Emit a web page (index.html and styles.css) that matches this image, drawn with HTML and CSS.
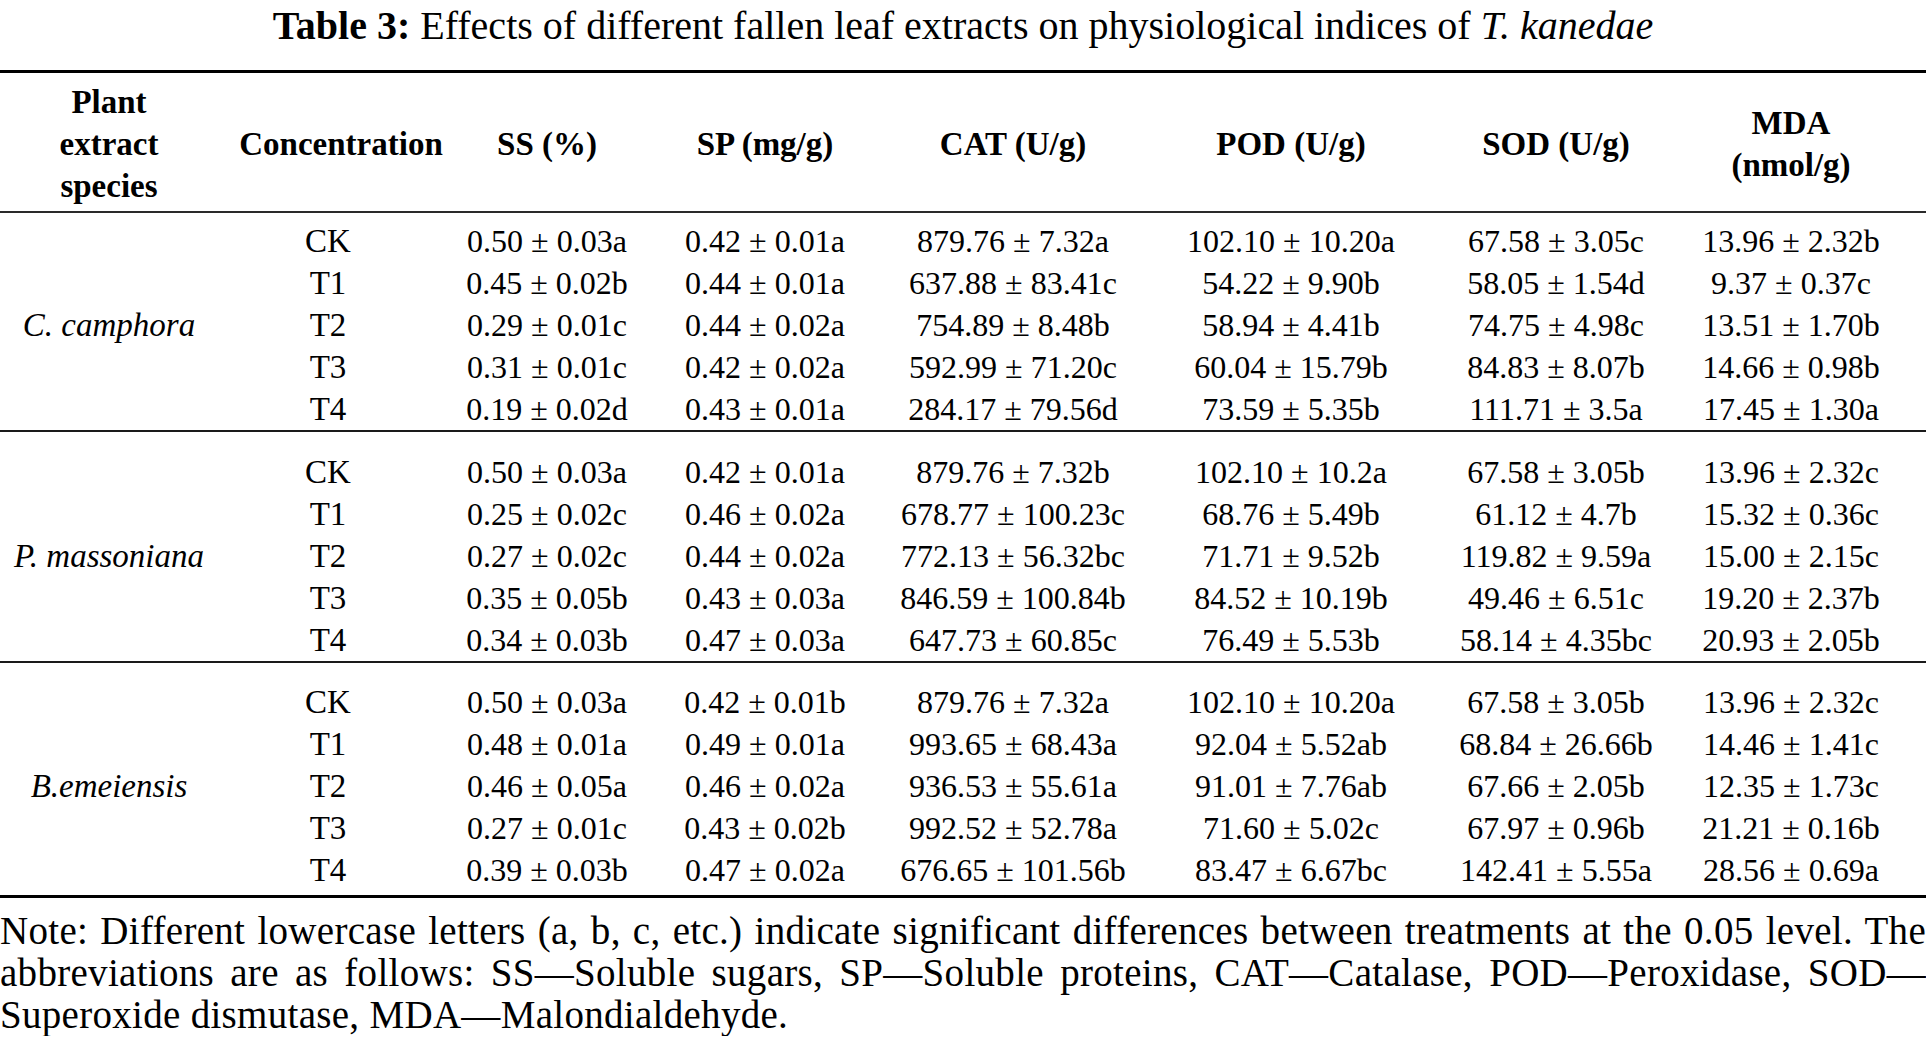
FILE: index.html
```html
<!DOCTYPE html>
<html lang="en">
<head>
<meta charset="utf-8">
<title>Table 3</title>
<link rel="stylesheet" href="styles.css">
</head>
<body>
<div class="page">
  <h1 class="title"><b>Table 3:</b> Effects of different fallen leaf extracts on physiological indices of <i>T. kanedae</i></h1>
  <table class="data">
    <colgroup>
      <col class="c1"><col class="c2"><col class="c3"><col class="c4"><col class="c5"><col class="c6"><col class="c7"><col class="c8">
    </colgroup>
    <thead>
      <tr>
        <th>Plant<br>extract<br>species</th>
        <th>Concentration</th>
        <th>SS (%)</th>
        <th>SP (mg/g)</th>
        <th>CAT (U/g)</th>
        <th>POD (U/g)</th>
        <th>SOD (U/g)</th>
        <th>MDA<br>(nmol/g)</th>
      </tr>
    </thead>
    <tbody class="g g1">
      <tr class="first"><td rowspan="5" class="species"><i>C. camphora</i></td><td class="conc">CK</td><td>0.50 ± 0.03a</td><td>0.42 ± 0.01a</td><td>879.76 ± 7.32a</td><td>102.10 ± 10.20a</td><td>67.58 ± 3.05c</td><td>13.96 ± 2.32b</td></tr>
      <tr><td class="conc">T1</td><td>0.45 ± 0.02b</td><td>0.44 ± 0.01a</td><td>637.88 ± 83.41c</td><td>54.22 ± 9.90b</td><td>58.05 ± 1.54d</td><td>9.37 ± 0.37c</td></tr>
      <tr><td class="conc">T2</td><td>0.29 ± 0.01c</td><td>0.44 ± 0.02a</td><td>754.89 ± 8.48b</td><td>58.94 ± 4.41b</td><td>74.75 ± 4.98c</td><td>13.51 ± 1.70b</td></tr>
      <tr><td class="conc">T3</td><td>0.31 ± 0.01c</td><td>0.42 ± 0.02a</td><td>592.99 ± 71.20c</td><td>60.04 ± 15.79b</td><td>84.83 ± 8.07b</td><td>14.66 ± 0.98b</td></tr>
      <tr class="last"><td class="conc">T4</td><td>0.19 ± 0.02d</td><td>0.43 ± 0.01a</td><td>284.17 ± 79.56d</td><td>73.59 ± 5.35b</td><td>111.71 ± 3.5a</td><td>17.45 ± 1.30a</td></tr>
    </tbody>
    <tbody class="g g2">
      <tr class="first"><td rowspan="5" class="species"><i>P. massoniana</i></td><td class="conc">CK</td><td>0.50 ± 0.03a</td><td>0.42 ± 0.01a</td><td>879.76 ± 7.32b</td><td>102.10 ± 10.2a</td><td>67.58 ± 3.05b</td><td>13.96 ± 2.32c</td></tr>
      <tr><td class="conc">T1</td><td>0.25 ± 0.02c</td><td>0.46 ± 0.02a</td><td>678.77 ± 100.23c</td><td>68.76 ± 5.49b</td><td>61.12 ± 4.7b</td><td>15.32 ± 0.36c</td></tr>
      <tr><td class="conc">T2</td><td>0.27 ± 0.02c</td><td>0.44 ± 0.02a</td><td>772.13 ± 56.32bc</td><td>71.71 ± 9.52b</td><td>119.82 ± 9.59a</td><td>15.00 ± 2.15c</td></tr>
      <tr><td class="conc">T3</td><td>0.35 ± 0.05b</td><td>0.43 ± 0.03a</td><td>846.59 ± 100.84b</td><td>84.52 ± 10.19b</td><td>49.46 ± 6.51c</td><td>19.20 ± 2.37b</td></tr>
      <tr class="last"><td class="conc">T4</td><td>0.34 ± 0.03b</td><td>0.47 ± 0.03a</td><td>647.73 ± 60.85c</td><td>76.49 ± 5.53b</td><td>58.14 ± 4.35bc</td><td>20.93 ± 2.05b</td></tr>
    </tbody>
    <tbody class="g g3">
      <tr class="first"><td rowspan="5" class="species"><i>B.emeiensis</i></td><td class="conc">CK</td><td>0.50 ± 0.03a</td><td>0.42 ± 0.01b</td><td>879.76 ± 7.32a</td><td>102.10 ± 10.20a</td><td>67.58 ± 3.05b</td><td>13.96 ± 2.32c</td></tr>
      <tr><td class="conc">T1</td><td>0.48 ± 0.01a</td><td>0.49 ± 0.01a</td><td>993.65 ± 68.43a</td><td>92.04 ± 5.52ab</td><td>68.84 ± 26.66b</td><td>14.46 ± 1.41c</td></tr>
      <tr><td class="conc">T2</td><td>0.46 ± 0.05a</td><td>0.46 ± 0.02a</td><td>936.53 ± 55.61a</td><td>91.01 ± 7.76ab</td><td>67.66 ± 2.05b</td><td>12.35 ± 1.73c</td></tr>
      <tr><td class="conc">T3</td><td>0.27 ± 0.01c</td><td>0.43 ± 0.02b</td><td>992.52 ± 52.78a</td><td>71.60 ± 5.02c</td><td>67.97 ± 0.96b</td><td>21.21 ± 0.16b</td></tr>
      <tr class="last"><td class="conc">T4</td><td>0.39 ± 0.03b</td><td>0.47 ± 0.02a</td><td>676.65 ± 101.56b</td><td>83.47 ± 6.67bc</td><td>142.41 ± 5.55a</td><td>28.56 ± 0.69a</td></tr>
    </tbody>
  </table>
  <div class="note">
    <span class="line just">Note: Different lowercase letters (a, b, c, etc.) indicate significant differences between treatments at the 0.05 level. The</span>
    <span class="line just">abbreviations are as follows: SS—Soluble sugars, SP—Soluble proteins, CAT—Catalase, POD—Peroxidase, SOD—</span>
    <span class="line">Superoxide dismutase, MDA—Malondialdehyde.</span>
  </div>
</div>
</body>
</html>
```

FILE: styles.css
```css
html, body {
  margin: 0;
  padding: 0;
  background: #ffffff;
}

body {
  color: #000000;
  font-family: "Liberation Serif", "Times New Roman", serif;
}

.page {
  width: 1926px;
}

.title {
  margin: 0 0 21px 0;
  padding-top: 2px;
  font-size: 40px;
  line-height: 47px;
  font-weight: normal;
  text-align: center;
  white-space: nowrap;
}

.title b {
  font-weight: bold;
}

.data {
  width: 1926px;
  table-layout: fixed;
  border-collapse: separate;
  border-spacing: 0;
}

.c1 { width: 218px; }
.c2 { width: 246px; }
.c3 { width: 166px; }
.c4 { width: 270px; }
.c5 { width: 226px; }
.c6 { width: 330px; }
.c7 { width: 200px; }
.c8 { width: 270px; }

.data th {
  font-size: 33px;
  line-height: 42px;
  font-weight: bold;
  text-align: center;
  vertical-align: middle;
  padding: 8px 0 4px 0;
  border-top: 3px solid #000000;
  border-bottom: 2px solid #2a2a2a;
  white-space: nowrap;
}

.data td {
  font-size: 32px;
  line-height: 42px;
  text-align: center;
  vertical-align: middle;
  padding: 0;
  white-space: nowrap;
}

.data td.conc {
  font-size: 33px;
  padding-right: 26px;
}

.data td.species {
  font-size: 33px;
  border-bottom: 2px solid #1a1a1a;
}

.data tr.last td {
  border-bottom: 2px solid #1a1a1a;
}

.g1 tr.first td { padding-top: 7px; }
.g1 tr.last td,
.g1 td.species { padding-bottom: 0; }

.g2 tr.first td { padding-top: 19px; }
.g2 tr.last td,
.g2 td.species { padding-bottom: 0; }

.g3 tr.first td { padding-top: 18px; }
.g3 tr.last td,
.g3 td.species { padding-bottom: 4px; }

.g3 tr.last td,
.g3 td.species {
  border-bottom: 3px solid #000000;
}

.note {
  margin-top: 12px;
  font-size: 39px;
  line-height: 42px;
  letter-spacing: 0.3px;
}

.note .line {
  display: block;
}

.note .just {
  text-align: justify;
  text-align-last: justify;
}
```
